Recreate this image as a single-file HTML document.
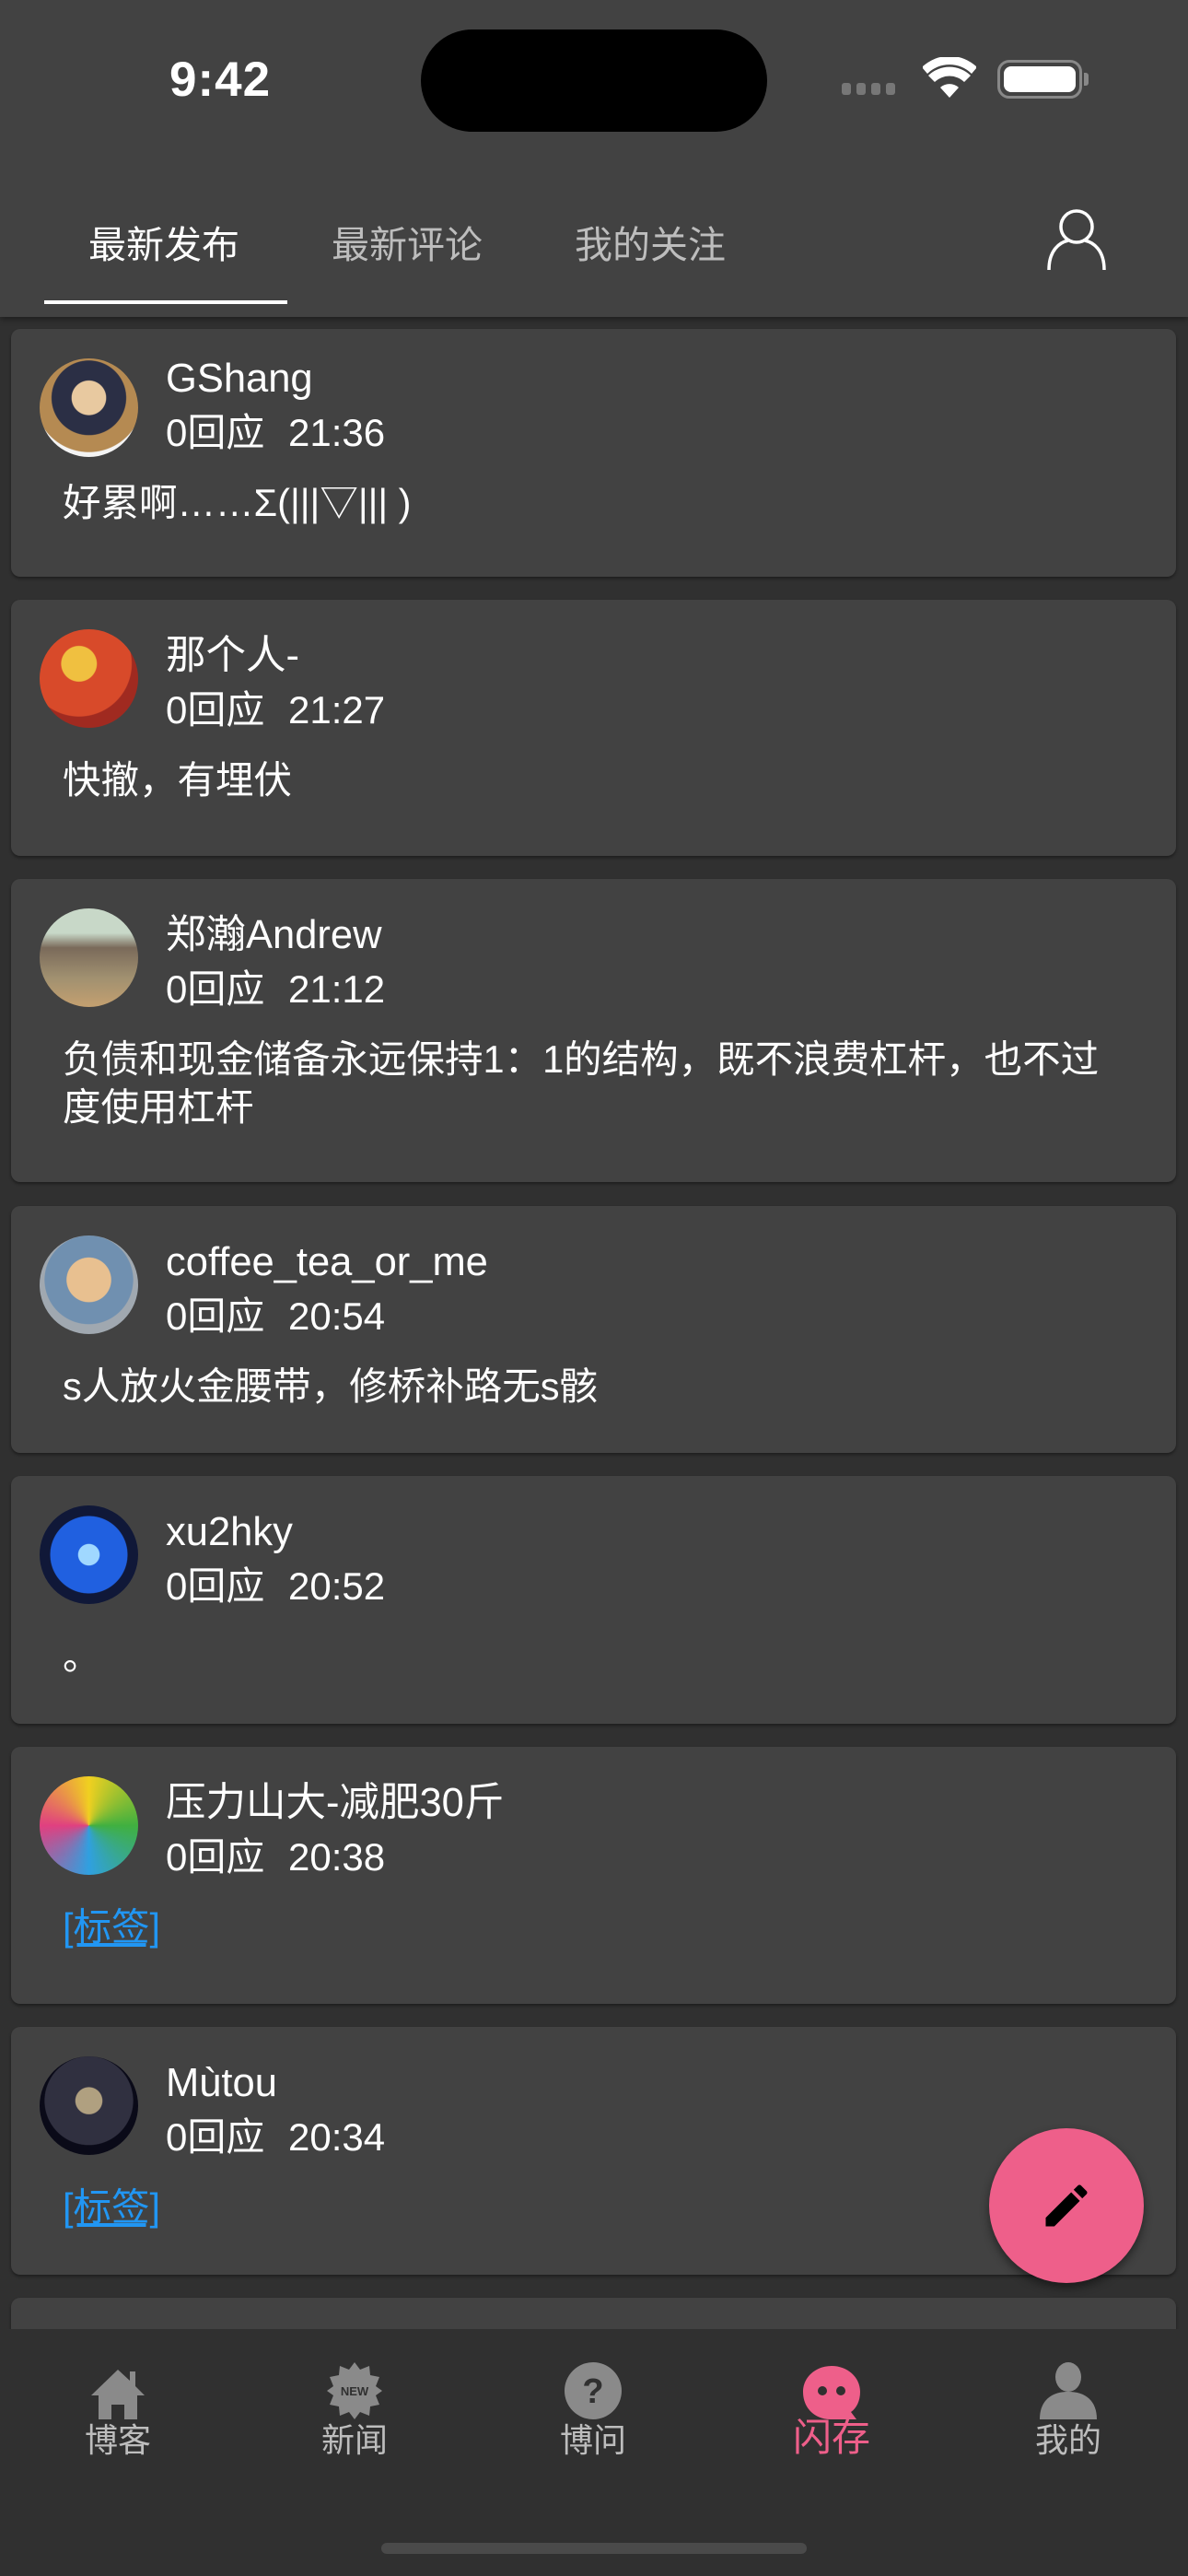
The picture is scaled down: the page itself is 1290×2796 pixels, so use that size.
<!DOCTYPE html>
<html><head><meta charset="utf-8">
<style>
*{margin:0;padding:0;box-sizing:border-box}
body{width:1290px;height:2796px;background:#303030;font-family:"Liberation Sans","Noto Sans CJK SC",sans-serif;color:#fff;position:relative;overflow:hidden}
.hdr{position:absolute;left:0;top:0;width:1290px;height:344px;background:#424242;box-shadow:0 3px 6px rgba(0,0,0,.35);z-index:2}
.time{position:absolute;left:184px;top:56px;font-size:53px;font-weight:bold;letter-spacing:1px}
.island{position:absolute;left:457px;top:32px;width:376px;height:111px;border-radius:56px;background:#000}
.tab{position:absolute;top:232px;font-size:41px;color:#bdbdbd}
.card{position:absolute;left:12px;width:1265px;background:#424242;border-radius:10px;box-shadow:0 2px 3px rgba(0,0,0,.4)}
.av{position:absolute;left:31px;top:32px;width:107px;height:107px;border-radius:50%}
.nm{position:absolute;left:168px;top:37px;font-size:43.5px;line-height:48px;white-space:nowrap}
.mt{position:absolute;left:168px;top:96px;font-size:42px;line-height:48px;white-space:nowrap;word-spacing:14px}
.ct{position:absolute;left:56px;top:170px;font-size:41.5px;line-height:52px;white-space:nowrap}
.c1 .nm{top:30px}.c1 .mt{top:89px}.c1 .ct{top:163px}
.lk{color:#2196f3;text-decoration:underline}
.nav{position:absolute;left:0;top:2528px;width:1290px;height:268px;background:#303030;z-index:3}
.ni{position:absolute;top:0;width:200px;text-align:center}
.nl{position:absolute;top:92px;width:200px;text-align:center;font-size:36px;color:#bdbdbd}
</style></head><body>
<div class="hdr">
 <div class="time">9:42</div>
 <div class="island"></div>
 <div style="position:absolute;left:914px;top:90px;display:flex;gap:6px">
  <div style="width:10px;height:13px;border-radius:3px;background:#777"></div><div style="width:10px;height:13px;border-radius:3px;background:#777"></div><div style="width:10px;height:13px;border-radius:3px;background:#777"></div><div style="width:10px;height:13px;border-radius:3px;background:#777"></div>
 </div>
 <svg style="position:absolute;left:1002px;top:62px" width="58" height="44" viewBox="0 0 58 44"><path d="M29 44 L19 33 A15 15 0 0 1 39 33 Z" fill="#fff"/><path d="M6 20 A33 33 0 0 1 52 20 L45 27 A23 23 0 0 0 13 27 Z" fill="#fff"/><path d="M-1 11 A43 43 0 0 1 59 11 L53 18 A34 34 0 0 0 5 18 Z" fill="#fff"/></svg>
 <div style="position:absolute;left:1083px;top:65px;width:92px;height:42px;border:3px solid #888;border-radius:13px;padding:4px"><div style="width:100%;height:100%;background:#fff;border-radius:8px"></div></div>
 <div style="position:absolute;left:1177px;top:79px;width:5px;height:14px;background:#888;border-radius:0 3px 3px 0"></div>
 <div class="tab" style="left:96px;color:#fff">最新发布</div>
 <div class="tab" style="left:360px">最新评论</div>
 <div class="tab" style="left:624px">我的关注</div>
 <div style="position:absolute;left:48px;top:326px;width:264px;height:4px;background:#fff"></div>
 <svg style="position:absolute;left:1136px;top:226px" width="66" height="68" viewBox="0 0 66 68"><circle cx="33" cy="20" r="17" fill="none" stroke="#fff" stroke-width="3.5"/><path d="M3 67 C3 45 15 37 24 35 M63 67 C63 45 51 37 42 35" fill="none" stroke="#fff" stroke-width="3.5"/></svg>
</div>

<div class="card c1" style="top:357px;height:269px"><div class="av" style="background:radial-gradient(circle at 50% 40%,#e8c9a0 0 22%,#2b2f45 23% 48%,#b58a52 49% 70%,#f4f4f4 71%)"></div><div class="nm">GShang</div><div class="mt">0回应 21:36</div><div class="ct">好累啊……Σ(|||▽||| )</div></div>
<div class="card" style="top:651px;height:278px"><div class="av" style="background:radial-gradient(circle at 40% 35%,#f0c040 0 20%,#d84a2a 21% 60%,#a02a20 61%)"></div><div class="nm">那个人-</div><div class="mt">0回应 21:27</div><div class="ct">快撤，有埋伏</div></div>
<div class="card" style="top:954px;height:329px"><div class="av" style="background:linear-gradient(#c8d8c8 0 25%,#7a6a5a 40%,#a09070 70%,#c4a070)"></div><div class="nm">郑瀚Andrew</div><div class="mt">0回应 21:12</div><div class="ct">负债和现金储备永远保持1：1的结构，既不浪费杠杆，也不过<br>度使用杠杆</div></div>
<div class="card" style="top:1309px;height:268px"><div class="av" style="background:radial-gradient(circle at 50% 45%,#e8c090 0 30%,#7090b0 31% 60%,#a0a8b0 61%)"></div><div class="nm">coffee_tea_or_me</div><div class="mt">0回应 20:54</div><div class="ct">s人放火金腰带，修桥补路无s骸</div></div>
<div class="card" style="top:1602px;height:269px"><div class="av" style="background:radial-gradient(circle at 50% 50%,#a0d8ff 0 15%,#2060e0 16% 55%,#101838 56%)"></div><div class="nm">xu2hky</div><div class="mt">0回应 20:52</div><div class="ct">。</div></div>
<div class="card" style="top:1896px;height:279px"><div class="av" style="background:conic-gradient(#f0d020,#40b040,#30a0e0,#e04080,#f0d020)"></div><div class="nm">压力山大-减肥30斤</div><div class="mt">0回应 20:38</div><div class="ct lk">[标签]</div></div>
<div class="card" style="top:2200px;height:269px"><div class="av" style="background:radial-gradient(circle at 50% 45%,#b0a080 0 18%,#303040 19% 60%,#0a0a18 61%)"></div><div class="nm">Mùtou</div><div class="mt">0回应 20:34</div><div class="ct lk">[标签]</div></div>
<div class="card" style="top:2494px;height:200px"></div>

<div style="position:absolute;left:1074px;top:2310px;width:168px;height:168px;border-radius:50%;background:#ee5f8a;box-shadow:0 5px 10px rgba(0,0,0,.45);z-index:4">
 <svg style="position:absolute;left:54px;top:54px" width="60" height="60" viewBox="0 0 24 24"><path d="M3 17.25V21h3.75L17.81 9.94l-3.75-3.75L3 17.25zM20.71 7.04a1 1 0 0 0 0-1.41l-2.34-2.34a1 1 0 0 0-1.41 0l-1.83 1.83 3.75 3.75 1.83-1.83z" fill="#000"/></svg>
</div>

<div class="nav">
 <div class="ni" style="left:28px;top:42px"><svg width="62" height="56" viewBox="0 0 62 56"><path d="M31 2 L2 30 L10 30 L10 56 L24 56 L24 40 L38 40 L38 56 L52 56 L52 30 L60 30 L50 20 L50 4 L44 4 L44 14 Z" fill="#8a8a8a"/></svg></div>
 <div class="nl" style="left:28px">博客</div>
 <div class="ni" style="left:285px;top:36px"><svg width="60" height="62" viewBox="0 0 60 62"><path d="M30 0 L36 8 L46 4 L47 14 L57 16 L53 26 L60 31 L53 36 L57 46 L47 48 L46 58 L36 54 L30 62 L24 54 L14 58 L13 48 L3 46 L7 36 L0 31 L7 26 L3 16 L13 14 L14 4 L24 8 Z" fill="#8a8a8a"/><text x="30" y="36" font-size="13" font-weight="bold" fill="#303030" text-anchor="middle" font-family="Liberation Sans">NEW</text></svg></div>
 <div class="nl" style="left:285px">新闻</div>
 <div class="ni" style="left:544px;top:36px"><svg width="62" height="62" viewBox="0 0 62 62"><circle cx="31" cy="31" r="31" fill="#8a8a8a"/><text x="31" y="44" font-size="38" font-weight="bold" fill="#303030" text-anchor="middle" font-family="Liberation Sans">?</text></svg></div>
 <div class="nl" style="left:544px">博问</div>
 <div class="ni" style="left:803px;top:40px"><svg width="62" height="58" viewBox="0 0 62 58"><path d="M31 0 C48 0 62 12 62 28 C62 38 58 46 52 50 L58 58 L30 58 C13 58 0 46 0 28 C0 12 14 0 31 0Z" fill="#ee5f8a"/><circle cx="21" cy="27" r="5" fill="#303030"/><circle cx="41" cy="27" r="5" fill="#303030"/></svg></div>
 <div class="nl" style="left:803px;top:84px;font-size:42px;color:#ee5f8a">闪存</div>
 <div class="ni" style="left:1060px;top:36px"><svg width="62" height="62" viewBox="0 0 62 62"><ellipse cx="31" cy="16" rx="14" ry="16" fill="#8a8a8a"/><path d="M0 62 C0 42 12 32 31 32 C50 32 62 42 62 62 Z" fill="#8a8a8a"/></svg></div>
 <div class="nl" style="left:1060px">我的</div>
 <div style="position:absolute;left:414px;top:232px;width:462px;height:12px;border-radius:6px;background:#4a4a4a"></div>
</div>
</body></html>
